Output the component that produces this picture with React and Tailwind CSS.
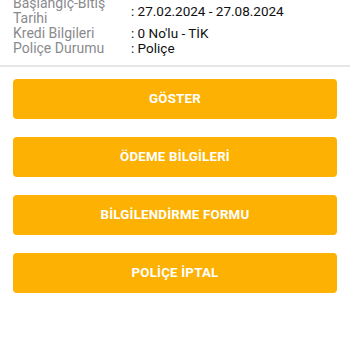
export default function App() {
  const rows = [
    { label: "Başlangıç-Bitiş Tarihi", value: ": 27.02.2024 - 27.08.2024" },
    { label: "Kredi Bilgileri", value: ": 0 No'lu - TİK" },
    { label: "Poliçe Durumu", value: ": Poliçe" },
  ];
  const buttons = ["GÖSTER", "ÖDEME BİLGİLERİ", "BİLGİLENDİRME FORMU", "POLİÇE İPTAL"];
  return (
    <div className="w-[350px] h-[350px] overflow-hidden bg-white" style={{ fontFamily: "Roboto, 'Liberation Sans', sans-serif" }}>
      <div className="-mt-[4px] pb-[9px] px-[13px] border-b-2 border-[#e6e6e6]">
        {rows.map((r) => (
          <div key={r.label} className="flex items-center">
            <div className="w-[118px] shrink-0 text-[14px] leading-[15px] text-[#8a8a8e] pr-[14px]">{r.label}</div>
            <div className="text-[13.5px] leading-[15px] text-[#111111]">{r.value}</div>
          </div>
        ))}
      </div>
      <div className="flex flex-col gap-[18px] px-[13px] pt-[12px]">
        {buttons.map((b) => (
          <div key={b} className="h-[40px] rounded-[4px] bg-[#fdb102] flex items-center justify-center text-white font-bold text-[13.3px] tracking-[0.2px]">
            {b}
          </div>
        ))}
      </div>
    </div>
  );
}
